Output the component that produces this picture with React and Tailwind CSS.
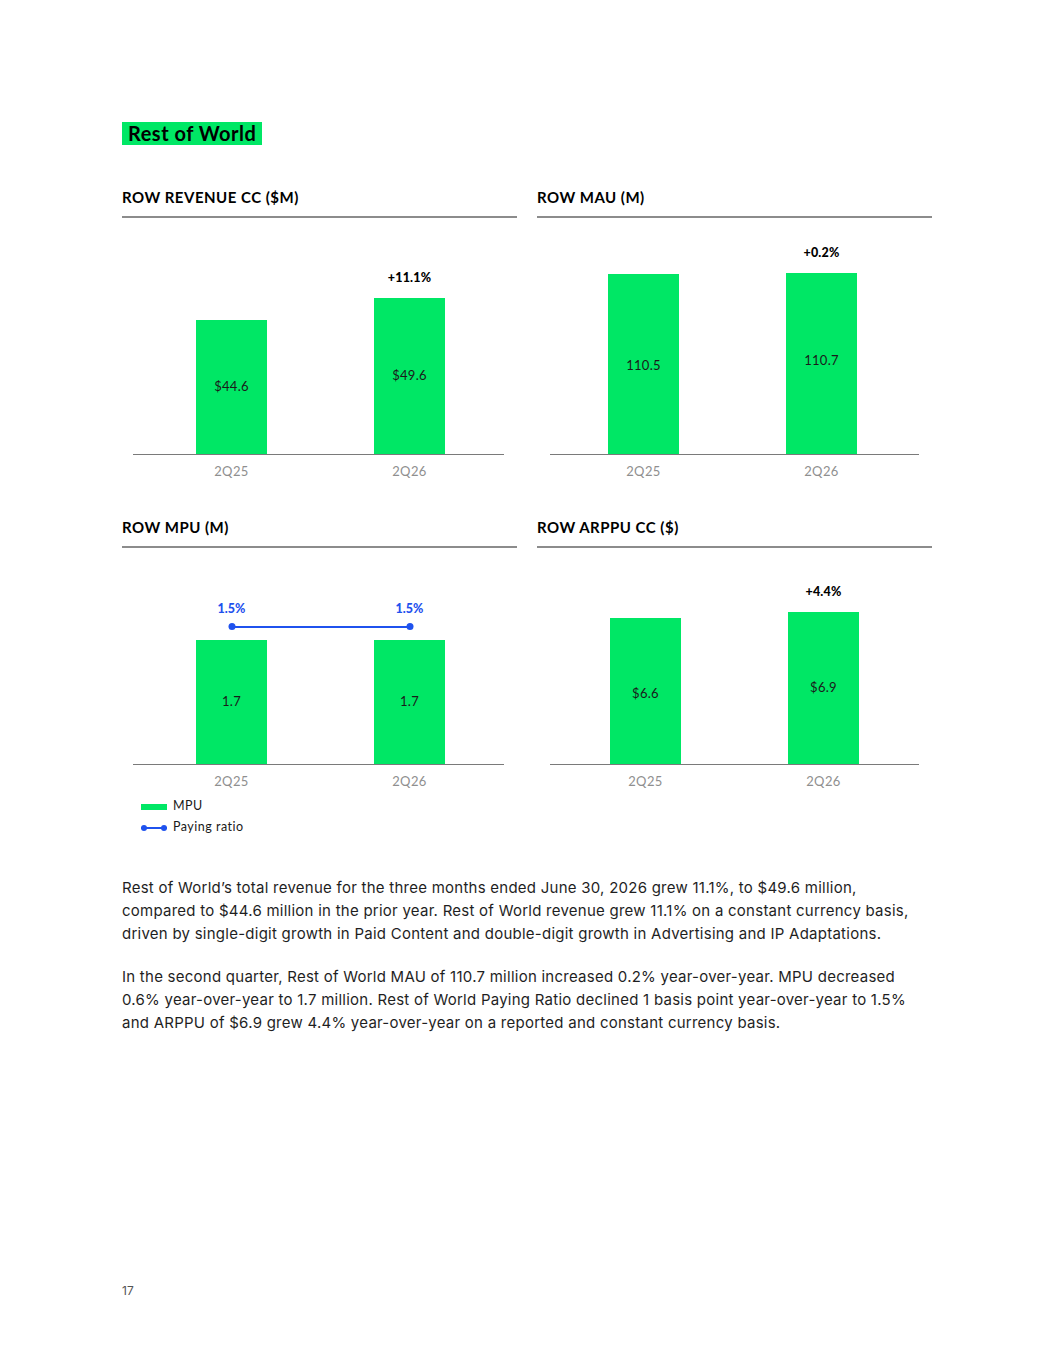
import React from 'react'

const head = { fontFamily: 'Lato, "Open Sans", sans-serif' }
const body = { fontFamily: 'Inter, "Liberation Sans", sans-serif' }

const ChartCard = ({ title, plotHeight, inset, bars, ratio, children }) => {
    return (
        <div style={head}>
            <div className="h-[31px] border-b-2 border-[#8c8c8c]">
                <p className="text-[15px] leading-[20px] font-bold text-black tracking-[0.5px]">{title}</p>
            </div>
            <div className={inset}>
                <div className="relative flex items-end gap-[107px] border-b border-[#7a7a7a]" style={{ height: plotHeight, paddingLeft: bars.pad }}>
                    {ratio && (
                        <div className="absolute h-[2px] bg-[#1f52ee]" style={{ left: bars.pad + 35, width: 178, bottom: bars.items[0].h + 12 }}></div>
                    )}
                    {bars.items.map((b) => (
                        <div key={b.q} className="relative w-[71px] bg-[#00e765] flex items-center justify-center" style={{ height: b.h }}>
                            <span className="text-[13px] text-[#1a1a1a] tracking-[0.3px]" style={{ transform: `translateY(${b.dy || 0}px)` }}>{b.v}</span>
                            {b.delta && (
                                <span className="absolute bottom-full mb-[11px] left-0 right-0 text-center text-[12.5px] leading-[18px] font-black text-black tracking-[0.2px]">{b.delta}</span>
                            )}
                            {ratio && (
                                <>
                                    <span className="absolute left-1/2 -translate-x-1/2 bottom-full mb-[10px] size-[7px] rounded-full bg-[#1f52ee]"></span>
                                    <span className="absolute bottom-full mb-[23px] left-0 right-0 text-center text-[12.5px] leading-[16px] font-black text-[#1f52ee]">{ratio}</span>
                                </>
                            )}
                        </div>
                    ))}
                </div>
                <div className="flex gap-[107px] mt-[8px]" style={{ paddingLeft: bars.pad }}>
                    {bars.items.map((b) => (
                        <p key={b.q} className="w-[71px] text-center text-[13px] leading-[16px] text-[#8f8f8f] tracking-[0.4px]">{b.q}</p>
                    ))}
                </div>
                {children}
            </div>
        </div>
    )
}

const App = () => {
    return (
        <div className="w-[1055px] min-h-[1365px] bg-white pt-[122px] pl-[122px]">
            <div className="w-fit h-[23px] bg-[#00e765] px-[6px]" style={head}>
                <p className="text-[20px] leading-[23px] font-bold text-black tracking-[0.5px]">Rest of World</p>
            </div>

            <div className="w-[810px] mt-[42px] grid grid-cols-2 gap-x-[20px] gap-y-[38px]">
                <ChartCard
                    title="ROW REVENUE CC ($M)"
                    plotHeight={237}
                    inset="ml-[11px] w-[371px]"
                    bars={{ pad: 63, items: [{ q: '2Q25', h: 134, v: '$44.6' }, { q: '2Q26', h: 156, v: '$49.6', delta: '+11.1%' }] }}
                />
                <ChartCard
                    title="ROW MAU (M)"
                    plotHeight={237}
                    inset="ml-[13px] w-[369px]"
                    bars={{ pad: 58, items: [{ q: '2Q25', h: 180, v: '110.5', dy: 2 }, { q: '2Q26', h: 181, v: '110.7', dy: -3, delta: '+0.2%' }] }}
                />
                <ChartCard
                    title="ROW MPU (M)"
                    plotHeight={217}
                    inset="ml-[11px] w-[371px]"
                    ratio="1.5%"
                    bars={{ pad: 63, items: [{ q: '2Q25', h: 124, v: '1.7' }, { q: '2Q26', h: 124, v: '1.7' }] }}
                >
                    <div className="mt-[7px] pl-[8px] text-[12.5px] tracking-[0.5px] text-[#1a1a1a]">
                        <div className="h-[21px] flex items-center gap-[6px]">
                            <span className="w-[26px] h-[6px] bg-[#00e765]"></span>
                            <span>MPU</span>
                        </div>
                        <div className="h-[21px] flex items-center gap-[6px]">
                            <span className="relative w-[26px] h-[6px] flex items-center">
                                <span className="absolute left-0 size-[6px] rounded-full bg-[#1f52ee]"></span>
                                <span className="w-full h-[2px] bg-[#1f52ee]"></span>
                                <span className="absolute right-0 size-[6px] rounded-full bg-[#1f52ee]"></span>
                            </span>
                            <span>Paying ratio</span>
                        </div>
                    </div>
                </ChartCard>
                <ChartCard
                    title="ROW ARPPU CC ($)"
                    plotHeight={217}
                    inset="ml-[13px] w-[369px]"
                    bars={{ pad: 60, items: [{ q: '2Q25', h: 146, v: '$6.6', dy: 3 }, { q: '2Q26', h: 152, v: '$6.9', delta: '+4.4%' }] }}
                />
            </div>

            <div className="w-[795px] mt-[38px] text-[15px] leading-[23px] tracking-[0.25px] text-[#1f1f1f] space-y-[20px]" style={body}>
                <p>Rest of World’s total revenue for the three months ended June 30, 2026 grew 11.1%, to $49.6 million, compared to $44.6 million in the prior year. Rest of World revenue grew 11.1% on a constant currency basis, driven by single-digit growth in Paid Content and double-digit growth in Advertising and IP Adaptations.</p>
                <p>In the second quarter, Rest of World MAU of 110.7 million increased 0.2% year-over-year. MPU decreased 0.6% year-over-year to 1.7 million. Rest of World Paying Ratio declined 1 basis point year-over-year to 1.5% and ARPPU of $6.9 grew 4.4% year-over-year on a reported and constant currency basis.</p>
            </div>

            <p className="mt-[250px] text-[12px] leading-[14px] text-[#555]" style={body}>17</p>
        </div>
    )
}

export default App
